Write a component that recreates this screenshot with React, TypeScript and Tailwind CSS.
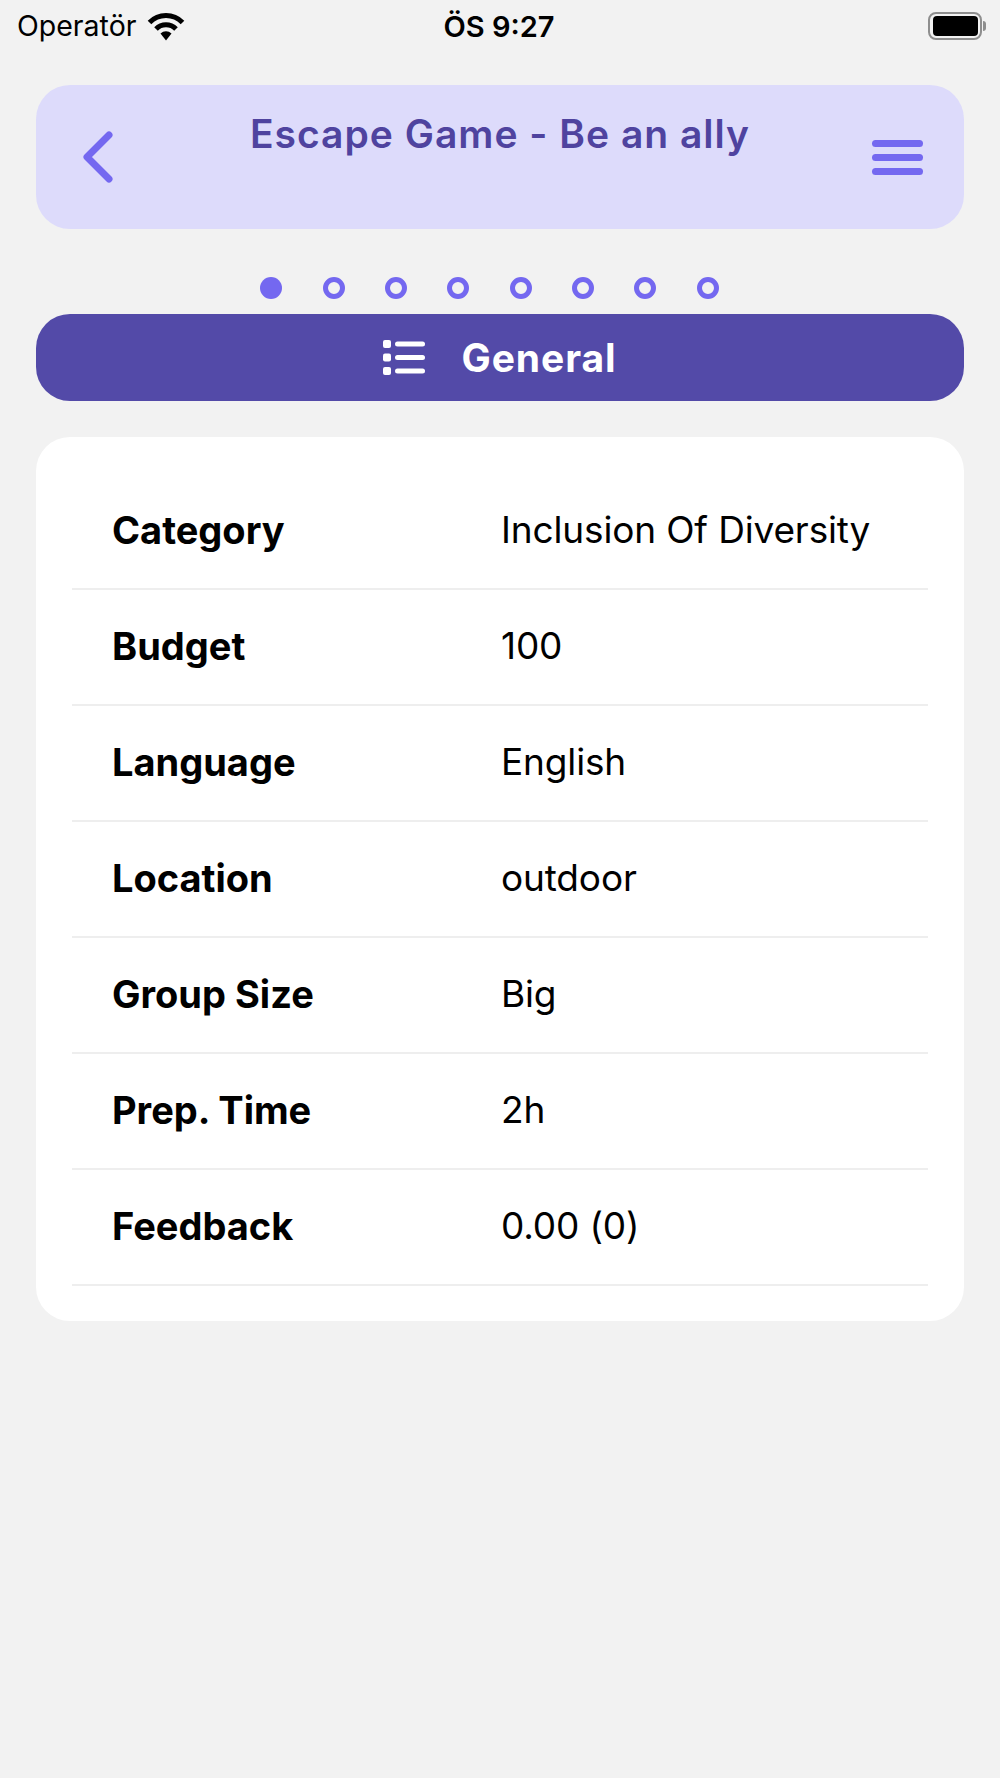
const rows = [
  { label: 'Category', value: 'Inclusion Of Diversity' },
  { label: 'Budget', value: '100' },
  { label: 'Language', value: 'English' },
  { label: 'Location', value: 'outdoor' },
  { label: 'Group Size', value: 'Big' },
  { label: 'Prep. Time', value: '2h' },
  { label: 'Feedback', value: '0.00 (0)' },
];

const dots = [0, 1, 2, 3, 4, 5, 6, 7];

function Wifi() {
  return (
    <svg width="38" height="29" viewBox="0 0 38 29" fill="none" stroke="#000" strokeWidth="5">
      <path d="M2.5 10.5 A23 23 0 0 1 35.5 10.5" />
      <path d="M9 17 A14 14 0 0 1 29 17" />
      <path d="M13.5 21.5 L19 28.5 L24.5 21.5 A8 8 0 0 0 13.5 21.5 Z" fill="#000" stroke="none" />
    </svg>
  );
}

function Battery() {
  return (
    <div className="flex items-center">
      <div className="flex h-[28px] w-[54px] items-center justify-center rounded-[8px] border-2 border-[#8e8e8e]">
        <div className="h-[20px] w-[45px] rounded-[4px] bg-black" />
      </div>
      <div className="ml-[1px] h-[10px] w-[3px] rounded-r-full bg-[#8e8e8e]" />
    </div>
  );
}

export default function App() {
  return (
    <div className="h-[1778px] w-[1000px] overflow-hidden bg-[#f2f2f2] font-['Inter',sans-serif] text-black">
      {/* status bar */}
      <div className="grid h-[52px] grid-cols-3 items-center pl-[17px] pr-[14px]">
        <div className="flex items-center gap-[11px]">
          <span className="text-[28.5px] leading-none">Operatör</span>
          <Wifi />
        </div>
        <div className="pr-[5px] text-center text-[29px] font-semibold leading-none">ÖS 9:27</div>
        <div className="flex justify-end">
          <Battery />
        </div>
      </div>

      <div className="px-[36px] pt-[33px]">
        {/* header */}
        <div className="flex h-[144px] items-start rounded-[34px] bg-[#dddbfb] pl-[47px] pr-[41px]">
          <div className="flex h-full w-[45px] items-center">
            <svg width="30" height="52" viewBox="0 0 30 52" fill="none" stroke="#7468f0" strokeWidth="7" strokeLinecap="round" strokeLinejoin="round">
              <path d="M26 4 L4 26 L26 48" />
            </svg>
          </div>
          <h1 className="flex-1 pt-[27px] text-center text-[39px] font-semibold leading-[44px] tracking-[1px] text-[#4f439f]">
            Escape Game - Be an ally
          </h1>
          <div className="flex h-full flex-col justify-center gap-[7px]">
            <div className="h-[7px] w-[51px] rounded-full bg-[#7468f0]" />
            <div className="h-[7px] w-[51px] rounded-full bg-[#7468f0]" />
            <div className="h-[7px] w-[51px] rounded-full bg-[#7468f0]" />
          </div>
        </div>

        {/* pager dots */}
        <div className="mt-[48px] flex justify-center gap-[40.4px] pr-[21px]">
          {dots.map((d) => (
            <div
              key={d}
              className={
                d === 0
                  ? 'h-[22px] w-[22px] rounded-full bg-[#7468f0]'
                  : 'h-[22px] w-[22px] rounded-full border-[5px] border-[#7468f0]'
              }
            />
          ))}
        </div>

        {/* section title */}
        <div className="mt-[15px] flex h-[87px] items-center justify-center gap-[36px] rounded-[34px] bg-[#534aa8] pr-[1px]">
          <svg width="43" height="36" viewBox="0 0 43 36" fill="#fff">
            <rect x="0" y="0" width="8" height="8" rx="2" />
            <rect x="0" y="13.5" width="8" height="8" rx="2" />
            <rect x="0" y="27" width="8" height="8" rx="2" />
            <rect x="12" y="1.5" width="30" height="5" rx="2.5" />
            <rect x="12" y="15" width="30" height="5" rx="2.5" />
            <rect x="12" y="28.5" width="30" height="5" rx="2.5" />
          </svg>
          <span className="text-[39px] font-bold leading-none tracking-[0.9px] text-white">General</span>
        </div>

        {/* details */}
        <div className="mt-[36px] rounded-[34px] bg-white px-[36px] pb-[35px] pt-[37px]">
          {rows.map((row) => (
            <div key={row.label} className="flex h-[116px] items-center border-b-2 border-[#eeeeee] pb-[2px] pl-[40px]">
              <div className="w-[389px] text-[38px] font-bold">{row.label}</div>
              <div className="text-[37px] tracking-[-0.15px]">{row.value}</div>
            </div>
          ))}
        </div>
      </div>
    </div>
  );
}
